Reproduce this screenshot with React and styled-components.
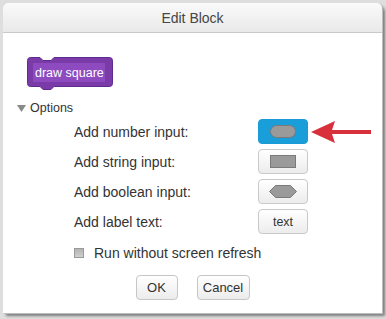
import React from "react";
import styled, { createGlobalStyle } from "styled-components";

const Global = createGlobalStyle`
  html, body { margin: 0; padding: 0; }
  body {
    background: #dedede;
    font-family: "Liberation Sans", Arial, sans-serif;
    width: 386px;
    height: 319px;
    overflow: hidden;
  }
`;

const Page = styled.div`
  padding: 3px 0 0 3px;
`;

const Dialog = styled.div`
  position: relative;
  width: 379px;
  height: 310px;
  background: #fff;
  border-radius: 6px 6px 0 0;
  box-shadow: 1px 1px 0 #bdbdbd, 3px 3px 3px rgba(0, 0, 0, 0.45);
  display: flex;
  flex-direction: column;
`;

const Header = styled.div`
  height: 29px;
  border-bottom: 1px solid #c9c9c9;
  border-radius: 6px 6px 0 0;
  background: linear-gradient(#fafafa, #e9e9e9);
  display: flex;
  align-items: center;
  justify-content: center;
  font-size: 14px;
  color: #464646;
`;

const Body = styled.div`
  padding: 24px 0 0 24px;
  display: flex;
  flex-direction: column;
`;

const BlockSvg = styled.svg`
  display: block;
`;

const OptionsToggle = styled.div`
  margin: 8px 0 0 -10px;
  height: 14px;
  display: flex;
  align-items: center;
  gap: 4px;
  font-size: 12.5px;
  color: #333;
`;

const Rows = styled.div`
  margin: 4px 0 0 47px;
  display: grid;
  grid-template-columns: 184px 50px;
  grid-auto-rows: 25px;
  row-gap: 5px;
  align-items: center;
`;

const Label = styled.div`
  font-size: 14px;
  color: #333;
`;

const TypeButton = styled.div`
  width: 48px;
  height: 23px;
  border: 1px solid ${(p) => (p.$active ? "#1a9ad6" : "#c9c9c9")};
  border-radius: 4px;
  background: ${(p) => (p.$active ? "#1a9ed9" : "linear-gradient(#fff, #ececec)")};
  display: flex;
  align-items: center;
  justify-content: center;
  font-size: 12.5px;
  color: #333;
`;

const CheckRow = styled.div`
  margin: 11px 0 0 47px;
  height: 16px;
  display: flex;
  align-items: center;
  gap: 10px;
  font-size: 14px;
  color: #333;
`;

const Check = styled.div`
  width: 8px;
  height: 8px;
  border: 1px solid #9a9a9a;
  background: linear-gradient(#b4b4b4, #cfcfcf);
`;

const Footer = styled.div`
  margin: 14px 0 0 -24px;
  display: flex;
  justify-content: center;
  gap: 19px;
`;

const FooterButton = styled.div`
  width: ${(p) => p.$w}px;
  height: 23px;
  border: 1px solid #c6c6c6;
  border-radius: 4px;
  background: linear-gradient(#fff, #ececec);
  display: flex;
  align-items: center;
  justify-content: center;
  font-size: 13px;
  color: #333;
`;

const Arrow = styled.svg`
  position: absolute;
  left: 305px;
  top: 112px;
`;

const Block = () => (
  <BlockSvg width="90" height="36" viewBox="0 0 90 36">
    <path
      d="M3.5,0.5 H13 L16,3.5 H24 L27,0.5 H82.5 Q85.5,0.5 85.5,3.5 V26.5 Q85.5,29.5 82.5,29.5 H27 L24,32.5 H16 L13,29.5 H3.5 Q0.5,29.5 0.5,26.5 V3.5 Q0.5,0.5 3.5,0.5 Z"
      fill="#7a3aa8"
      stroke="#5f2a8d"
    />
    <rect x="6" y="6" width="72" height="19" fill="#8d4bbf" />
    <text
      x="8"
      y="20"
      fill="#fff"
      fontSize="12.5"
      fontFamily="Liberation Sans, Arial, sans-serif"
    >
      draw square
    </text>
  </BlockSvg>
);

const NumberIcon = () => (
  <svg width="26" height="13" viewBox="0 0 26 13">
    <rect x="0.5" y="0.5" width="25" height="12" rx="6" fill="#9a9a9a" stroke="#7a7a7a" />
  </svg>
);
const StringIcon = () => (
  <svg width="26" height="13" viewBox="0 0 26 13">
    <rect x="0.5" y="0.5" width="25" height="12" fill="#9a9a9a" stroke="#7a7a7a" />
  </svg>
);
const BoolIcon = () => (
  <svg width="28" height="13" viewBox="0 0 28 13">
    <polygon points="6.5,0.5 21.5,0.5 27.5,6.5 21.5,12.5 6.5,12.5 0.5,6.5" fill="#9a9a9a" stroke="#7a7a7a" />
  </svg>
);

export default function App() {
  return (
    <Page>
      <Global />
      <Dialog>
        <Header>Edit Block</Header>
        <Body>
          <Block />
          <OptionsToggle>
            <svg width="9" height="7" viewBox="0 0 9 7">
              <polygon points="0,0 9,0 4.5,7" fill="#8a8a8a" />
            </svg>
            Options
          </OptionsToggle>
          <Rows>
            <Label>Add number input:</Label>
            <TypeButton $active>
              <NumberIcon />
            </TypeButton>
            <Label>Add string input:</Label>
            <TypeButton>
              <StringIcon />
            </TypeButton>
            <Label>Add boolean input:</Label>
            <TypeButton>
              <BoolIcon />
            </TypeButton>
            <Label>Add label text:</Label>
            <TypeButton>text</TypeButton>
          </Rows>
          <CheckRow>
            <Check />
            Run without screen refresh
          </CheckRow>
          <Footer>
            <FooterButton $w={40}>OK</FooterButton>
            <FooterButton $w={51}>Cancel</FooterButton>
          </Footer>
        </Body>
        <Arrow width="66" height="32" viewBox="0 0 66 32">
          <polygon points="3,17 27,6 24,15 63,15 63,19 24,19 27,28" fill="#d8313b" />
        </Arrow>
      </Dialog>
    </Page>
  );
}
